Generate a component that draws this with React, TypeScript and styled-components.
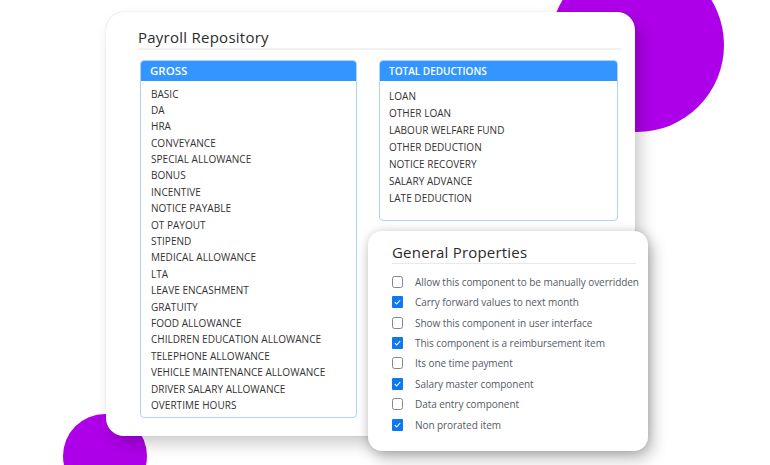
import React from "react";
import styled, { createGlobalStyle } from "styled-components";

const GlobalStyle = createGlobalStyle`
  html, body {
    margin: 0;
    padding: 0;
    background: #fff;
    font-family: "Open Sans", "Liberation Sans", sans-serif;
  }
`;

const Stage = styled.div`
  position: relative;
  width: 770px;
  height: 465px;
  overflow: hidden;
  padding: 12px 0 0 106px;
  box-sizing: border-box;
`;

const Blob = styled.div<{ $size: number; $left: number; $top: number }>`
  position: absolute;
  width: ${(p) => p.$size}px;
  height: ${(p) => p.$size}px;
  left: ${(p) => p.$left}px;
  top: ${(p) => p.$top}px;
  border-radius: 50%;
  background: #ae00e8;
`;

const Card = styled.div`
  position: relative;
  box-sizing: border-box;
  width: 529px;
  height: 424px;
  padding: 15px 14px 0 32px;
  background: #fff;
  border-radius: 18px;
  box-shadow: 0 0 1px rgba(0, 0, 0, 0.25), 6px 8px 16px rgba(0, 0, 0, 0.2);
`;

const Title = styled.h2`
  margin: 0;
  height: 21px;
  border-bottom: 2px solid #f1f2f3;
  font-size: 15px;
  line-height: 20px;
  font-weight: 400;
  letter-spacing: 0.25px;
  color: #2b2b2b;
`;

const Columns = styled.div`
  display: flex;
  align-items: flex-start;
  gap: 22px;
  margin: 10px 3px 0 2px;
`;

const Panel = styled.section<{ $width: number; $height: number }>`
  box-sizing: border-box;
  width: ${(p) => p.$width}px;
  height: ${(p) => p.$height}px;
  border: 1.5px solid #a9d4ff;
  border-radius: 4px;
  overflow: hidden;
`;

const PanelHeader = styled.div<{ $small?: boolean }>`
  height: 21px;
  margin: -1px -1px 0;
  padding-left: 10px;
  background: #3395ff;
  color: #fff;
  font-size: ${(p) => (p.$small ? 10 : 11.5)}px;
  font-weight: 600;
  line-height: ${(p) => (p.$small ? 22 : 21)}px;
`;

const ItemList = styled.ul<{ $pitch: number; $top: number; $left: number }>`
  list-style: none;
  margin: 0;
  padding: ${(p) => p.$top}px 0 0 ${(p) => p.$left}px;

  & li {
    height: ${(p) => p.$pitch}px;
    line-height: ${(p) => p.$pitch}px;
    font-size: 10px;
    letter-spacing: 0.03px;
    color: #333;
    white-space: nowrap;
  }
`;

const Popup = styled.div`
  position: absolute;
  left: 368px;
  top: 231px;
  box-sizing: border-box;
  width: 280px;
  height: 220px;
  padding: 11px 12px 0 24px;
  background: #fff;
  border-radius: 14px;
  box-shadow: 0 0 8px rgba(0, 0, 0, 0.12), 4px 7px 16px rgba(0, 0, 0, 0.28);
`;

const PopupTitle = styled.h3`
  margin: 0;
  height: 21px;
  border-bottom: 1px solid #e8e9eb;
  font-size: 15px;
  line-height: 21px;
  font-weight: 400;
  letter-spacing: 0.2px;
  color: #2b2b2b;
`;

const Options = styled.div`
  display: flex;
  flex-direction: column;
  margin-top: 7.6px;
`;

const Option = styled.div`
  display: flex;
  align-items: center;
  gap: 12px;
  height: 20.4px;
  font-size: 10px;
  letter-spacing: -0.06px;
  color: #555a66;
  white-space: nowrap;
`;

const Box = styled.span<{ $on: boolean }>`
  flex: none;
  box-sizing: border-box;
  display: flex;
  align-items: center;
  justify-content: center;
  width: 11px;
  height: 12px;
  border-radius: ${(p) => (p.$on ? 1 : 2.5)}px;
  border: ${(p) => (p.$on ? "none" : "1px solid #85858f")};
  background: ${(p) => (p.$on ? "#0f77f0" : "#fff")};
`;

const gross = [
  "BASIC",
  "DA",
  "HRA",
  "CONVEYANCE",
  "SPECIAL ALLOWANCE",
  "BONUS",
  "INCENTIVE",
  "NOTICE PAYABLE",
  "OT PAYOUT",
  "STIPEND",
  "MEDICAL ALLOWANCE",
  "LTA",
  "LEAVE ENCASHMENT",
  "GRATUITY",
  "FOOD ALLOWANCE",
  "CHILDREN EDUCATION ALLOWANCE",
  "TELEPHONE ALLOWANCE",
  "VEHICLE MAINTENANCE ALLOWANCE",
  "DRIVER SALARY ALLOWANCE",
  "OVERTIME HOURS",
];

const deductions = [
  "LOAN",
  "OTHER LOAN",
  "LABOUR WELFARE FUND",
  "OTHER DEDUCTION",
  "NOTICE RECOVERY",
  "SALARY ADVANCE",
  "LATE DEDUCTION",
];

const properties = [
  { label: "Allow this component to be manually overridden", on: false },
  { label: "Carry forward values to next month", on: true },
  { label: "Show this component in user interface", on: false },
  { label: "This component is a reimbursement item", on: true },
  { label: "Its one time payment", on: false },
  { label: "Salary master component", on: true },
  { label: "Data entry component", on: false },
  { label: "Non prorated item", on: true },
];

const Check = () => (
  <svg width="7" height="6" viewBox="0 0 7 6" fill="none">
    <path d="M0.8 3.2 L2.7 5 L6.2 1" stroke="#fff" strokeWidth="1.1" />
  </svg>
);

const App = () => {
  return (
    <Stage>
      <GlobalStyle />
      <Blob $size={174} $left={550} $top={-42} />
      <Blob $size={84} $left={63} $top={414} />
      <Card>
        <Title>Payroll Repository</Title>
        <Columns>
          <Panel $width={217} $height={358}>
            <PanelHeader>GROSS</PanelHeader>
            <ItemList $pitch={16.4} $top={4.5} $left={10}>
              {gross.map((item) => (
                <li key={item}>{item}</li>
              ))}
            </ItemList>
          </Panel>
          <Panel $width={239} $height={161}>
            <PanelHeader $small>TOTAL DEDUCTIONS</PanelHeader>
            <ItemList $pitch={17} $top={7} $left={9}>
              {deductions.map((item) => (
                <li key={item}>{item}</li>
              ))}
            </ItemList>
          </Panel>
        </Columns>
      </Card>
      <Popup>
        <PopupTitle>General Properties</PopupTitle>
        <Options>
          {properties.map((prop) => (
            <Option key={prop.label}>
              <Box $on={prop.on}>{prop.on && <Check />}</Box>
              {prop.label}
            </Option>
          ))}
        </Options>
      </Popup>
    </Stage>
  );
};

export default App;
